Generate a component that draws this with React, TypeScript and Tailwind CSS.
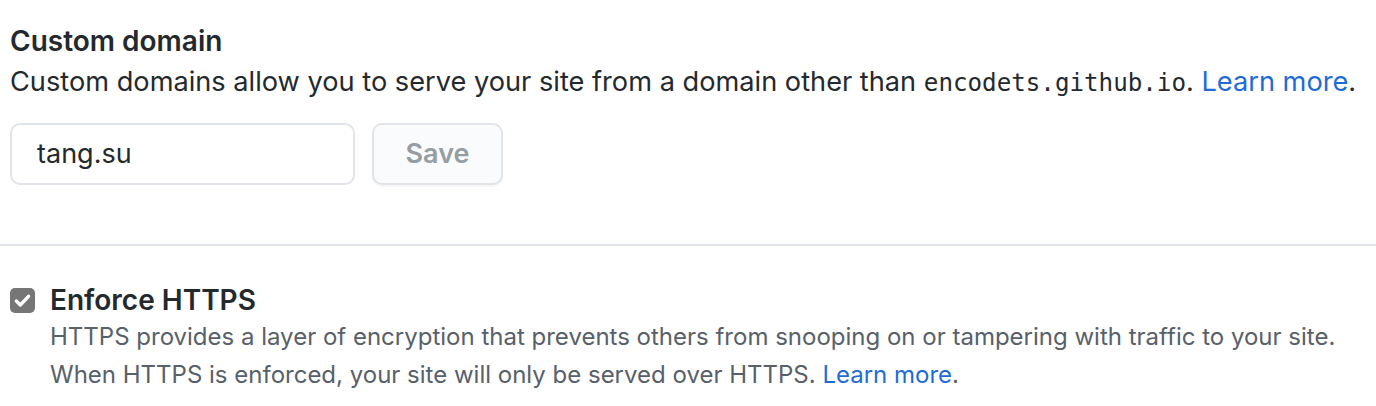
export default function App() {
  return (
    <div
      className="bg-white w-[1376px] h-[406px] overflow-hidden text-[#24292e]"
      style={{ fontFamily: 'Inter, "Noto Sans", sans-serif' }}
    >
      {/* Custom domain */}
      <div className="px-[10px] pt-[22px]">
        <h3 className="text-[28px] font-semibold leading-[39px]">Custom domain</h3>
        <p className="text-[27.2px] leading-[38px] mt-[2px]">
          Custom domains allow you to serve your site from a domain other than{' '}
          <code className="font-['DejaVu_Sans_Mono',monospace] text-[24.2px]">encodets.github.io</code>.{' '}
          <a className="text-[#1f6bd6]">Learn more</a>.
        </p>
        <div className="flex gap-[17px] mt-[21px]">
          <div className="w-[345px] h-[62px] border-2 border-[#e1e4e8] rounded-[10px] flex items-center px-[25px] text-[27px]">
            tang.su
          </div>
          <button className="w-[131px] h-[62px] border-2 border-[#e1e4e8] rounded-[10px] bg-[#fafbfc] shadow-[0_2px_0_rgba(27,31,35,0.04)] text-[27px] font-semibold text-[#959da5]">
            Save
          </button>
        </div>
      </div>

      <div className="mt-[59px] border-t-2 border-[#e1e4e8]" />

      {/* Enforce HTTPS */}
      <div className="px-[10px] pt-[39px] flex gap-[15px]">
        <div className="w-[25px] h-[25px] mt-[3px] rounded-[5px] bg-[#767676] flex items-center justify-center shrink-0">
          <svg width="19" height="19" viewBox="0 0 16 16" fill="none">
            <path d="M2.8 8.4l3.4 3.4L13.2 4.4" stroke="white" strokeWidth="2.8" strokeLinecap="round" strokeLinejoin="round" />
          </svg>
        </div>
        <div>
          <div className="text-[28px] font-semibold leading-[30px]">Enforce HTTPS</div>
          <p className="text-[24px] leading-[38px] text-[#586069] mt-[3px]">
            HTTPS provides a layer of encryption that prevents others from snooping on or tampering with traffic to your site.
            <br />
            When HTTPS is enforced, your site will only be served over HTTPS.{' '}
            <a className="text-[#1f6bd6]">Learn more</a>.
          </p>
        </div>
      </div>
    </div>
  );
}
